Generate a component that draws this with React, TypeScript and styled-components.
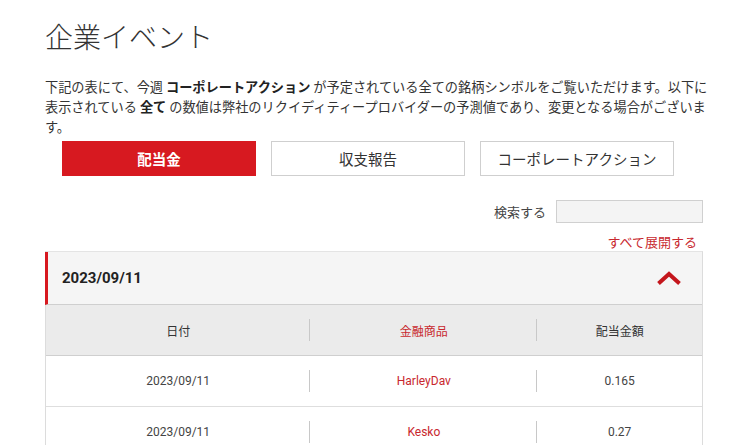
import React from "react";
import styled, { createGlobalStyle } from "styled-components";

const GlobalStyle = createGlobalStyle`
  html, body { margin: 0; padding: 0; background: #ffffff; }
  body { font-family: "Noto Sans CJK JP", "Noto Sans", sans-serif; color: #333; }
  * { box-sizing: border-box; }
`;

const RED = "#d71920";
const LINK_RED = "#c8282e";

const Page = styled.div`
  width: 750px;
  height: 445px;
  overflow: hidden;
  padding: 16px 0 0 45px;
`;

const Title = styled.h1`
  margin: 0;
  font-size: 28px;
  line-height: 40px;
  font-weight: 300;
  color: #333;
  letter-spacing: 0;
`;

const Intro = styled.p`
  margin: 21px 0 0;
  width: 672px;
  font-size: 13.2px;
  line-height: 20px;
  color: #333;
  b { font-weight: 700; color: #222; }
`;

const Tabs = styled.div`
  display: flex;
  gap: 15px;
  margin: 4px 0 0 17px;
`;

const Tab = styled.button<{ $active?: boolean }>`
  width: 194px;
  height: 35px;
  padding: 0;
  font-family: "Noto Sans CJK JP", sans-serif;
  font-size: 14.5px;
  font-weight: ${(p) => (p.$active ? 700 : 400)};
  color: ${(p) => (p.$active ? "#fff" : "#333")};
  background: ${(p) => (p.$active ? RED : "#fff")};
  border: 1px solid ${(p) => (p.$active ? RED : "#cfcfcf")};
  cursor: pointer;
`;

const Content = styled.div`
  width: 658px;
`;

const SearchRow = styled.div`
  display: flex;
  justify-content: flex-end;
  align-items: center;
  gap: 10px;
  margin-top: 24px;
`;

const SearchLabel = styled.label`
  font-size: 13px;
  color: #444;
`;

const SearchInput = styled.input`
  width: 147px;
  height: 23px;
  background: #f4f4f4;
  border: 1px solid #d0d0d0;
  outline: none;
`;

const ExpandRow = styled.div`
  display: flex;
  justify-content: flex-end;
  padding-right: 6px;
  margin-top: 10px;
`;

const ExpandLink = styled.a`
  font-size: 13px;
  line-height: 18px;
  color: ${LINK_RED};
  text-decoration: none;
`;

const Accordion = styled.section`
  margin-top: 0;
  border: 1px solid #dcdcdc;
  border-top-color: #e4e4e4;
`;

const AccHeader = styled.div`
  display: flex;
  align-items: center;
  justify-content: space-between;
  height: 53px;
  padding: 0 20px 0 14px;
  background: #f5f5f5;
  border-left: 3px solid ${RED};
  margin-left: -1px;
  border-bottom: 1px solid #cfcfcf;
`;

const AccDate = styled.span`
  font-family: Roboto, "Noto Sans", sans-serif;
  font-size: 15px;
  font-weight: 700;
  color: #222;
`;

const Grid = styled.div`
  display: grid;
  grid-template-columns: 40.3% 34.6% 1fr;
`;

const HeadRow = styled(Grid)`
  height: 51px;
  background: #ebebeb;
  border-bottom: 1px solid #cfcfcf;
`;

const BodyRow = styled(Grid)`
  height: 51px;
  background: #fff;
  border-bottom: 1px solid #dedede;
`;

const Cell = styled.div<{ $red?: boolean; $sep?: boolean; $head?: boolean }>`
  position: relative;
  display: flex;
  align-items: center;
  justify-content: center;
  font-family: ${(p) =>
    p.$head ? '"Noto Sans CJK JP", sans-serif' : 'Roboto, "Noto Sans CJK JP", sans-serif'};
  font-size: 12px;
  color: ${(p) => (p.$red ? LINK_RED : p.$head ? "#333" : "#444")};
  &::after {
    content: "";
    display: ${(p) => (p.$sep ? "block" : "none")};
    position: absolute;
    right: 0;
    top: 14px;
    bottom: 14px;
    width: 1px;
    background: #c8c8c8;
  }
`;

const Chevron = () => (
  <svg width="26" height="15" viewBox="0 0 26 15" aria-hidden="true">
    <path d="M2.5 12.5 L13 3 L23.5 12.5" fill="none" stroke="#c4161c" strokeWidth="4" strokeLinejoin="miter" />
  </svg>
);

const rows = [
  { date: "2023/09/11", name: "HarleyDav", amount: "0.165" },
  { date: "2023/09/11", name: "Kesko", amount: "0.27" },
];

export default function App() {
  return (
    <Page>
      <GlobalStyle />
      <Title>企業イベント</Title>
      <Intro>
        下記の表にて、今週 <b>コーポレートアクション</b> が予定されている全ての銘柄シンボルをご覧いただけます。以下に表示されている <b>全て</b> の数値は弊社のリクイディティープロバイダーの予測値であり、変更となる場合がございます。
      </Intro>
      <Tabs>
        <Tab $active>配当金</Tab>
        <Tab>収支報告</Tab>
        <Tab>コーポレートアクション</Tab>
      </Tabs>
      <Content>
        <SearchRow>
          <SearchLabel htmlFor="search">検索する</SearchLabel>
          <SearchInput id="search" type="text" />
        </SearchRow>
        <ExpandRow>
          <ExpandLink href="#">すべて展開する</ExpandLink>
        </ExpandRow>
        <Accordion>
          <AccHeader>
            <AccDate>2023/09/11</AccDate>
            <Chevron />
          </AccHeader>
          <HeadRow>
            <Cell $head $sep>日付</Cell>
            <Cell $head $sep $red>金融商品</Cell>
            <Cell $head>配当金額</Cell>
          </HeadRow>
          {rows.map((r, i) => (
            <BodyRow key={i}>
              <Cell $sep>{r.date}</Cell>
              <Cell $sep $red>{r.name}</Cell>
              <Cell>{r.amount}</Cell>
            </BodyRow>
          ))}
        </Accordion>
      </Content>
    </Page>
  );
}
